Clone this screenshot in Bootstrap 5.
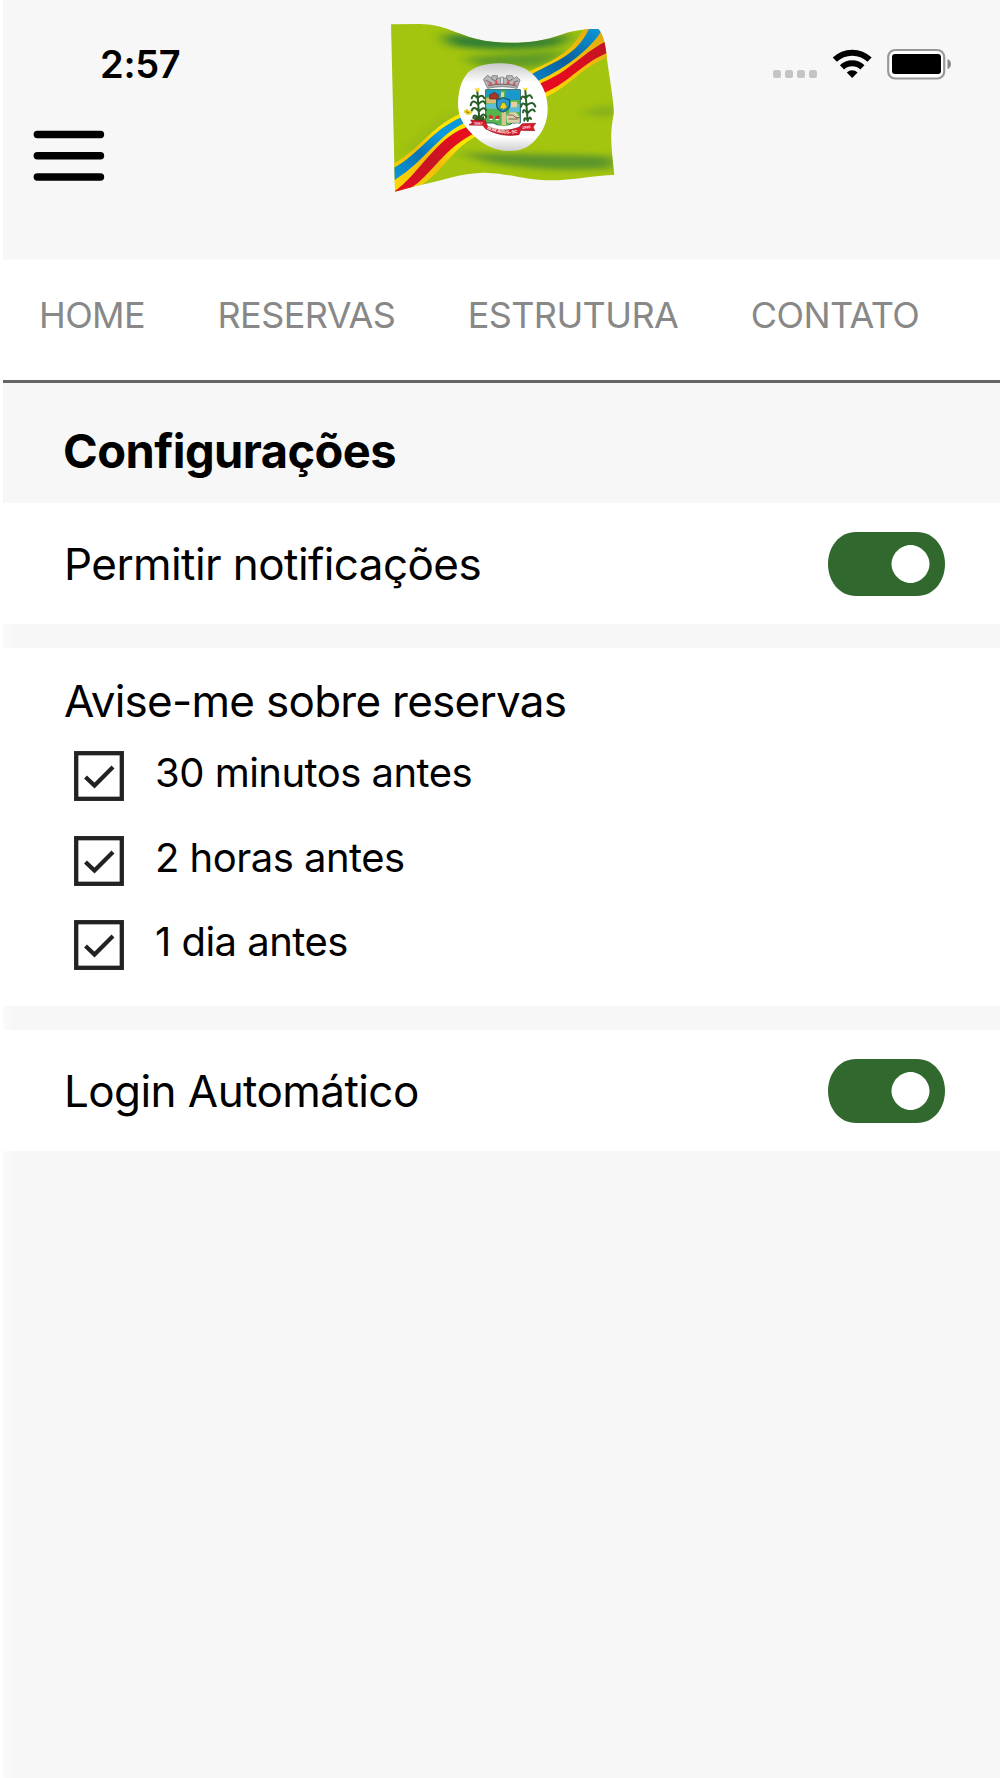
<!DOCTYPE html>
<html lang="pt-BR">
<head>
    <meta charset="UTF-8">
    <meta name="viewport" content="width=device-width, initial-scale=1, shrink-to-fit=no">
    <title>Configurações</title>
    <link href="https://cdn.jsdelivr.net/npm/bootstrap@5.3.0/dist/css/bootstrap.min.css" rel="stylesheet">
    <style>
        body {
            font-family: "Inter", "Liberation Sans", sans-serif;
            color: #000;
            background: #fff;
        }
        svg { display: block; flex: none; }

        .app {
            margin-left: 3px;
            min-height: 1778px;
            background: linear-gradient(90deg, #fbfbfb, #f7f7f7 12px);
        }

        .app-header {
            display: grid;
            grid-template-columns: 377px 250px 1fr;
            height: 259px;
            background: #f7f7f7;
        }
        .clock {
            font-size: 38px;
            font-weight: 600;
            line-height: 40px;
            letter-spacing: -.3px;
            padding: 44px 0 0 97px;
        }
        .menu-btn { padding: 43px 0 0 26px; }
        .flag { margin-top: 10px; }
        .status-icons { padding: 48px 0 0 143px; }

        .tabs {
            height: 124px;
            padding-left: 36px;
            gap: 72.5px;
            border-top: 1px solid #fbfbfb;
            border-bottom: 3px solid #666;
        }
        .tabs a {
            color: #888;
            font-size: 36px;
            line-height: 110px;
            letter-spacing: -.6px;
            text-decoration: none;
        }

        .page-title {
            height: 120px;
            margin: 0;
            padding: 16px 0 0 60px;
            font-size: 47px;
            font-weight: 700;
            line-height: 104px;
            letter-spacing: -.55px;
            background: #f7f7f7;
        }

        .setting {
            margin-left: -3px;
            padding: 0 55px 0 64px;
            font-size: 44px;
            letter-spacing: -.57px;
        }
        .setting-row { height: 121px; }
        .setting-group {
            height: 358px;
            margin: 24px 0 24px -3px;
            padding-top: 26px;
        }
        .setting-group h2 {
            margin: 0 0 5px;
            font-size: 44px;
            font-weight: 400;
            line-height: 55px;
            letter-spacing: -.72px;
        }
        .option {
            height: 84.5px;
            padding-left: 10px;
            gap: 31px;
            font-size: 40px;
            letter-spacing: -.52px;
            line-height: 78px;
        }
        .option svg { margin-top: 17px; }
    </style>
</head>
<body>
    <svg width="0" height="0" class="position-absolute">
        <symbol id="switch-on" viewBox="0 0 117 64">
            <path d="M28 0H89C106 0 117 15 117 32S106 64 89 64H28C11 64 0 49 0 32S11 0 28 0Z" fill="#30682d"/>
            <path d="M82.500 13C93 13 101.500 22.500 101.500 32S93 51 82.500 51S63.500 41.500 63.500 32S72 13 82.500 13Z" fill="#fff"/>
        </symbol>
        <symbol id="checkbox-on" viewBox="0 0 50 50">
            <rect x="2.200" y="2.200" width="45.600" height="45.600" fill="#fff" stroke="#222" stroke-width="4.300"/>
            <path d="M11.500 26L20.500 34.500L39 16" fill="none" stroke="#222" stroke-width="4.200"/>
        </symbol>
    </svg>

    <div class="app">
        <header class="app-header">
            <div>
                <div class="clock">2:57</div>
                <div class="menu-btn">
                    <svg width="80" height="60" viewBox="0 0 80 60" stroke="#000" stroke-width="7.400" stroke-linecap="round">
                        <path d="M8.300 7.500H71.500M8.300 28.800H71.500M8.300 50H71.500"/>
                    </svg>
                </div>
            </div>

            <!-- Bandeira de Bom Jesus -->
            <svg class="flag" width="250" height="190" viewBox="0 0 750 570">
                <defs>
                    <path id="flag-shape" d="M33 43L120 42C190 43 230 72 290 87C370 106 470 102 550 72C580 61 620 56 655 57C668 72 677 100 680 140C688 200 703 280 701 310C692 370 690 380 703 495C640 496 580 512 500 511C430 510 400 492 315 488C240 488 180 515 110 527L45 545Z"/>
                    <clipPath id="flag-clip"><use href="#flag-shape"/></clipPath>
                    <filter id="soft" x="-30%" y="-60%" width="160%" height="220%"><feGaussianBlur stdDeviation="26 9"/></filter>
                    <linearGradient id="blue" x1="0" y1="1" x2="1" y2="0">
                        <stop offset="0" stop-color="#0a9fe0"/>
                        <stop offset=".16" stop-color="#0a73b4"/>
                        <stop offset=".27" stop-color="#0b9ade"/>
                        <stop offset=".62" stop-color="#0b8cd0"/>
                        <stop offset=".8" stop-color="#0a609e"/>
                        <stop offset="1" stop-color="#0c9ddd"/>
                    </linearGradient>
                    <linearGradient id="red" x1="0" y1="1" x2="1" y2="0">
                        <stop offset="0" stop-color="#ec0c20"/>
                        <stop offset=".2" stop-color="#c51525"/>
                        <stop offset=".35" stop-color="#e80d20"/>
                        <stop offset=".8" stop-color="#e20b20"/>
                        <stop offset="1" stop-color="#b91823"/>
                    </linearGradient>
                    <linearGradient id="yellow" x1="0" y1="1" x2="1" y2="0">
                        <stop offset="0" stop-color="#ffdf00"/>
                        <stop offset=".2" stop-color="#f0bd09"/>
                        <stop offset=".32" stop-color="#ffe600"/>
                        <stop offset=".65" stop-color="#ffd800"/>
                        <stop offset="1" stop-color="#e0a313"/>
                    </linearGradient>
                    <linearGradient id="disc" x1="0" y1="0" x2="0" y2="1">
                        <stop offset="0" stop-color="#c9c9cb"/>
                        <stop offset=".22" stop-color="#fff"/>
                        <stop offset=".84" stop-color="#fff"/>
                        <stop offset="1" stop-color="#cfcfd1"/>
                    </linearGradient>
                </defs>
                <use href="#flag-shape" fill="#a4c50f"/>
                <g clip-path="url(#flag-clip)">
                    <g filter="url(#soft)">
                        <path d="M190 70C290 80 470 100 580 65L540 105C450 122 310 122 210 106Z" fill="#2d7d35"/>
                        <path d="M250 142C350 133 460 128 570 122L480 172L300 170Z" fill="#5f9b28"/>
                        <path d="M230 425C360 435 500 430 705 440V475C540 485 440 475 330 458Z" fill="#5c952a"/>
                        <path d="M600 308C640 298 670 288 710 280V318C670 322 640 320 600 308Z" fill="#83ae1b"/>
                        <path d="M90 438C150 400 180 360 240 310L220 300C150 345 120 390 70 420Z" fill="#93b914"/>
                    </g>
                    <path d="M30 466C110 430 150 350 245 309L450 183C520 152 575 128 616 50H700V135C610 165 570 228 504 258L286 380C210 420 180 500 105 535L30 560Z" fill="url(#yellow)"/>
                    <path d="M30 480C120 435 150 362 245 322L460 190C530 152 595 133 630 50H672C640 110 565 170 478 211L247 342C165 385 125 465 30 518Z" fill="url(#blue)"/>
                    <path d="M30 553C115 500 165 385 255 353L485 218C570 185 610 125 690 88V125C610 155 570 215 498 246L278 372C180 425 150 505 75 545Z" fill="url(#red)"/>
                </g>
                <path d="M355 160C400 158 440 172 464 198C490 225 504 260 503 300C502 335 490 363 466 390C445 414 420 423 386 423C345 422 310 405 282 377C252 350 234 320 234 282C235 245 242 215 262 190C285 168 315 161 355 160Z" fill="url(#disc)"/>

                <!-- coroa mural -->
                <path d="M310 208L323 196L334 204L337 197H352V204H380V197H397L401 206L410 200L420 210L411 235Q366 225 323 235Z" fill="#b9b7b8" stroke="#777" stroke-width="2.500"/>
                <path d="M317 211L332 218M334 206L347 214L352 204M380 205L386 214L398 207M401 217L414 212M324 228Q366 217 410 228" fill="none" stroke="#6a6569" stroke-width="3"/>
                <path d="M323 223L333 215L339 226ZM343 223L349 210L356 223ZM378 223L384 210L391 223ZM397 226L402 216L409 223Z" fill="#e45158"/>
                <path d="M362 201H370V222H362Z" fill="#eee" stroke="#666" stroke-width="2"/>

                <!-- escudo -->
                <path d="M317 239H421V339H397Q380 351 369 355Q356 345 340 339H317Z" fill="#55b44e" stroke="#25646e" stroke-width="3"/>
                <path d="M319 241H362V260H319ZM376 241H419V270H376Z" fill="#1a98ce"/>
                <path d="M319 281H352V296H319ZM387 281H419V306H387Z" fill="#5bbdd6"/>
                <path d="M319 264H355V280H319Z" fill="#dfb978"/>
                <path d="M329 255L343 247L355 255V267H329Z" fill="#a83725" stroke="#5b2620" stroke-width="2"/>
                <path d="M393 275H411V292H393ZM363 247H372V275H363Z" fill="#e9cf9c"/>
                <path d="M365 305H378V345H365Z" fill="#d8c494"/>
                <path d="M379 317L390 307H408L419 321V338H381Z" fill="#ddd1aa"/>
                <path d="M383 315H398L408 323H420M386 327H415" fill="none" stroke="#75654a" stroke-width="3"/>
                <path d="M350 270L369 263L389 270V286Q387 299 369 306Q351 299 350 286Z" fill="#289bd4" stroke="#16597c" stroke-width="4"/>
                <path d="M359 294L366 278H374L382 292L371 298Z" fill="#f0d520" stroke="#66701d" stroke-width="2"/>
                <path d="M326 319Q332 311 340 320L337 327H329ZM345 321Q354 312 361 320L355 328H346Z" fill="#d92b32"/>
                <path d="M329 328H337M347 329H356" stroke="#fff" stroke-width="4"/>
                <path d="M325 341Q366 354 414 340L409 358Q370 365 330 351Z" fill="#fff"/>

                <!-- ramos de milho -->
                <g fill="none" stroke="#285f26" stroke-width="6" stroke-linecap="round">
                    <path d="M292 245L298 330M291 263Q280 249 275 265M293 264Q307 250 313 265M294 283Q277 265 272 286M294 284Q311 265 316 281M296 303Q281 286 275 302M296 305Q311 287 318 300M297 325Q282 309 280 324M299 325Q310 305 319 320"/>
                    <path d="M436 242L443 333M437 265Q426 253 423 267M438 264Q450 247 456 264M440 288Q427 272 423 290M440 286Q459 270 466 290M442 311Q431 292 429 307M443 309Q459 291 464 304M443 330Q432 318 433 332M444 330Q450 317 453 327"/>
                </g>
                <path d="M281 325L289 319L298 325L311 318L315 330L302 337L285 333Z" fill="#35591f"/>
                <path d="M284 233L291 237L299 232L297 244L288 245ZM430 232L436 236L442 232L441 241L431 241Z" fill="#f5d62b"/>
                <path d="M252 302L261 296L267 302L278 304L273 313L262 315L253 308Z" fill="#e9cf1c"/>
                <path d="M258 305L267 308" stroke="#897c18" stroke-width="3"/>

                <!-- faixa -->
                <path d="M272 330L315 332L322 348Q367 371 417 352L427 341L467 340L459 351L464 362L422 361L417 374Q364 383 316 356L309 346L267 345L277 338Z" fill="#d91b2b" stroke="#8c1720" stroke-width="2"/>
                <g fill="#fff" font-family="Liberation Sans, sans-serif" font-weight="700">
                    <text x="282" y="343" font-size="10" transform="rotate(4 282 343)">19/07</text>
                    <path id="ribbon-line" d="M321 356Q367 378 420 367" fill="none"/>
                    <text font-size="13"><textPath href="#ribbon-line" textLength="94">BOM JESUS - SC</textPath></text>
                    <text x="427" y="356" font-size="11" transform="rotate(-3 427 356)">1995</text>
                </g>
            </svg>

            <div class="status-icons">
                <svg width="184" height="34" viewBox="0 0 184 34">
                    <g fill="#c4c4c4">
                        <rect x="0" y="22" width="8" height="8" rx="2.500"/>
                        <rect x="12" y="22" width="8" height="8" rx="2.500"/>
                        <rect x="24" y="22" width="8" height="8" rx="2.500"/>
                        <rect x="36" y="22" width="8" height="8" rx="2.500"/>
                    </g>
                    <g fill="none" stroke="#000" stroke-width="6">
                        <path d="M61.800 11.700A25 25 0 0 1 96.600 11.700"/>
                        <path d="M69 19.300A14.600 14.600 0 0 1 89.400 19.300"/>
                    </g>
                    <path d="M79.200 30L73.800 24.400A7.800 7.800 0 0 1 84.600 24.400Z"/>
                    <rect x="115.200" y="2" width="56" height="28.500" rx="7" fill="#fff" stroke="#999" stroke-width="2.200"/>
                    <rect x="119" y="6" width="49" height="20" rx="3"/>
                    <path d="M174.500 11Q178 12.500 178 16T174.500 21Z" fill="#888"/>
                </svg>
            </div>
        </header>

        <nav class="tabs d-flex bg-white">
            <a href="#">HOME</a>
            <a href="#">RESERVAS</a>
            <a href="#">ESTRUTURA</a>
            <a href="#">CONTATO</a>
        </nav>

        <main>
            <h1 class="page-title">Configurações</h1>

            <div class="setting setting-row bg-white d-flex align-items-center justify-content-between">
                <span>Permitir notificações</span>
                <svg width="117" height="64"><use href="#switch-on"/></svg>
            </div>

            <section class="setting setting-group bg-white">
                <h2>Avise-me sobre reservas</h2>
                <div class="option d-flex">
                    <svg width="50" height="50"><use href="#checkbox-on"/></svg>
                    <span>30 minutos antes</span>
                </div>
                <div class="option d-flex">
                    <svg width="50" height="50"><use href="#checkbox-on"/></svg>
                    <span>2 horas antes</span>
                </div>
                <div class="option d-flex">
                    <svg width="50" height="50"><use href="#checkbox-on"/></svg>
                    <span>1 dia antes</span>
                </div>
            </section>

            <div class="setting setting-row bg-white d-flex align-items-center justify-content-between">
                <span>Login Automático</span>
                <svg width="117" height="64"><use href="#switch-on"/></svg>
            </div>
        </main>
    </div>

    <script src="https://cdn.jsdelivr.net/npm/bootstrap@5.3.0/dist/js/bootstrap.bundle.min.js"></script>
</body>
</html>
